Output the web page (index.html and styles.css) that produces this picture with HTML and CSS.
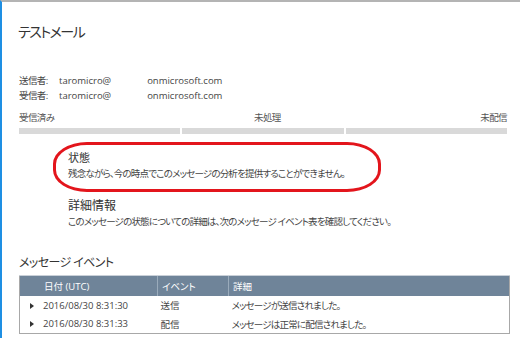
FILE: index.html
```html
<html>
<head>
<meta charset="utf-8">
<link rel="stylesheet" href="styles.css">
</head>
<body>
<div class="page">
  <h1 class="title">テストメール</h1>

  <div class="people">
    <div class="person"><span class="who">送信者:</span><span>taromicro@<span class="blur"></span>onmicrosoft.com</span></div>
    <div class="person"><span class="who">受信者:</span><span>taromicro@<span class="blur"></span>onmicrosoft.com</span></div>
  </div>

  <div class="progress">
    <div class="steps">
      <span>受信済み</span>
      <span>未処理</span>
      <span>未配信</span>
    </div>
    <div class="bars">
      <div class="bar"></div>
      <div class="bar"></div>
      <div class="bar"></div>
    </div>
  </div>

  <div class="info status">
    <div class="info-head">状態</div>
    <div class="info-text">残念ながら、今の時点でこのメッセージの分析を提供することができません。</div>
  </div>

  <div class="info detail">
    <div class="info-head big">詳細情報</div>
    <div class="info-text">このメッセージの状態についての詳細は、次のメッセージ イベント表を確認してください。</div>
  </div>

  <h2 class="events-title">メッセージ イベント</h2>
  <table class="events">
    <thead>
      <tr><th class="col-date">日付 (UTC)</th><th class="col-event">イベント</th><th>詳細</th></tr>
    </thead>
    <tbody>
      <tr><td class="col-date"><span class="arrow"></span>2016/08/30 8:31:30</td><td>送信</td><td class="jp">メッセージが送信されました。</td></tr>
      <tr><td class="col-date"><span class="arrow"></span>2016/08/30 8:31:33</td><td>配信</td><td class="jp">メッセージは正常に配信されました。</td></tr>
    </tbody>
  </table>
</div>
</body>
</html>
```

FILE: styles.css
```css
* {
  box-sizing: border-box;
}

body {
  margin: 0;
  background: #fff;
  color: #444;
  font-family: "Open Sans", "Noto Sans CJK JP", sans-serif;
  font-size: 9.5px;
  font-feature-settings: "palt";
}

.page {
  width: 520px;
  height: 338px;
  overflow: hidden;
  border-left: 2px solid #1e8fe3;
  border-top: 2px solid #b4b4b4;
  padding: 0 11px 0 17px;
}

.title {
  margin: 20px 0 0 -1px;
  font-size: 14px;
  font-weight: normal;
  line-height: 20px;
  color: #333;
  letter-spacing: -1.5px;
}

.people {
  margin-top: 31px;
  line-height: 15px;
}

.who {
  display: inline-block;
  width: 40px;
  letter-spacing: -0.6px;
}

.blur {
  display: inline-block;
  width: 36px;
}

.progress {
  margin-top: 8px;
}

.steps {
  display: flex;
  justify-content: space-between;
  line-height: 14px;
  color: #555;
  padding-right: 2px;
  letter-spacing: -0.6px;
}

.bars {
  display: flex;
  gap: 2px;
  margin-top: 3px;
  padding-right: 2px;
}

.bar {
  flex: 1;
  height: 6px;
  background: #d9d9d9;
}

.info {
  margin-left: 49px;
  line-height: 16px;
}

.info-text {
  letter-spacing: -0.8px;
}

.status {
  position: relative;
  margin-top: 16px;
}

.status::before {
  content: "";
  position: absolute;
  left: -15px;
  top: -8px;
  width: 322px;
  height: 44px;
  border: 3px solid #e3151c;
  border-radius: 34px / 22px;
}

.detail {
  margin-top: 16px;
}

.info-head {
  font-size: 11px;
  color: #333;
}

.info-head.big {
  font-size: 12px;
}

.events-title {
  margin: 25px 0 0;
  font-size: 12px;
  font-weight: normal;
  line-height: 16px;
  color: #333;
  letter-spacing: -0.6px;
}

.events {
  width: 491px;
  margin-top: 4px;
  border-collapse: collapse;
  border: 1px solid #a8a8a8;
  font-size: 9.5px;
  color: #444;
}

.events th {
  background: #6f8499;
  color: #fff;
  font-weight: normal;
  text-align: left;
  height: 20px;
  padding: 0 0 0 4px;
  border-top: 1px solid #c9d0d8;
  border-left: 1px solid #9aabbb;
}

.events th:first-child {
  border-left: none;
}

.events td {
  height: 19px;
  padding: 0 0 0 3px;
}

.events .jp {
  letter-spacing: -0.8px;
}

.events .col-date {
  width: 138px;
  padding-left: 24px;
}

.events .col-event {
  width: 71px;
}

.events td.col-date {
  padding-left: 10px;
}

.arrow {
  display: inline-block;
  width: 0;
  height: 0;
  border-top: 3px solid transparent;
  border-bottom: 3px solid transparent;
  border-left: 4px solid #333;
  margin-right: 9px;
  vertical-align: 0;
}
```
